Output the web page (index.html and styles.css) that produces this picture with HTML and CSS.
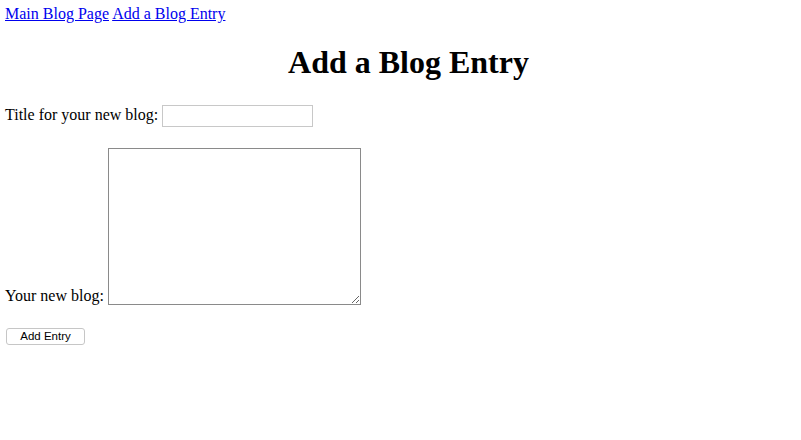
FILE: index.html
```html
<!DOCTYPE html>
<html>
<head>
<meta charset="utf-8">
<link rel="stylesheet" href="styles.css">
</head>
<body class="page">
<nav class="nav"><a href="#">Main Blog Page</a> <a href="#">Add a Blog Entry</a></nav>
<h1 class="title">Add a Blog Entry</h1>
<form class="form">
<p class="row">Title for your new blog: <input class="text-input" type="text"></p>
<p class="row">Your new blog: <textarea class="area"></textarea></p>
<button class="btn" type="button">Add Entry</button>
</form>
</body>
</html>
```
FILE: styles.css
```css
html, body { background: #fff; }
.page {
  margin: 5px;
  font-family: "Liberation Serif", "Times New Roman", serif;
  font-size: 16px;
  color: #000;
}
.nav a { color: #0000ee; }
.title {
  text-align: center;
  font-size: 32px;
  font-weight: bold;
  margin: 21px 0 24px;
  padding-left: 16px;
}
.row { margin: 21px 0; }
.text-input {
  width: 151px;
  height: 22px;
  box-sizing: border-box;
  border: 1px solid #c8c8c8;
  padding: 1px 2px;
  font: 13px "Liberation Sans", sans-serif;
  vertical-align: middle;
}
.area {
  width: 253px;
  height: 157px;
  box-sizing: border-box;
  border: 1px solid #8a8a8a;
  vertical-align: bottom;
  padding: 2px;
  font: 13px "Liberation Mono", monospace;
  margin: 0;
}
.btn {
  width: 79px;
  height: 17px;
  box-sizing: border-box;
  margin-left: 1px;
  padding: 0;
  border: 1px solid #c6c6c6;
  border-radius: 3px;
  background: #fff;
  font: 11.5px "Liberation Sans", Arial, sans-serif;
  color: #000;
  line-height: 14px;
}
```
